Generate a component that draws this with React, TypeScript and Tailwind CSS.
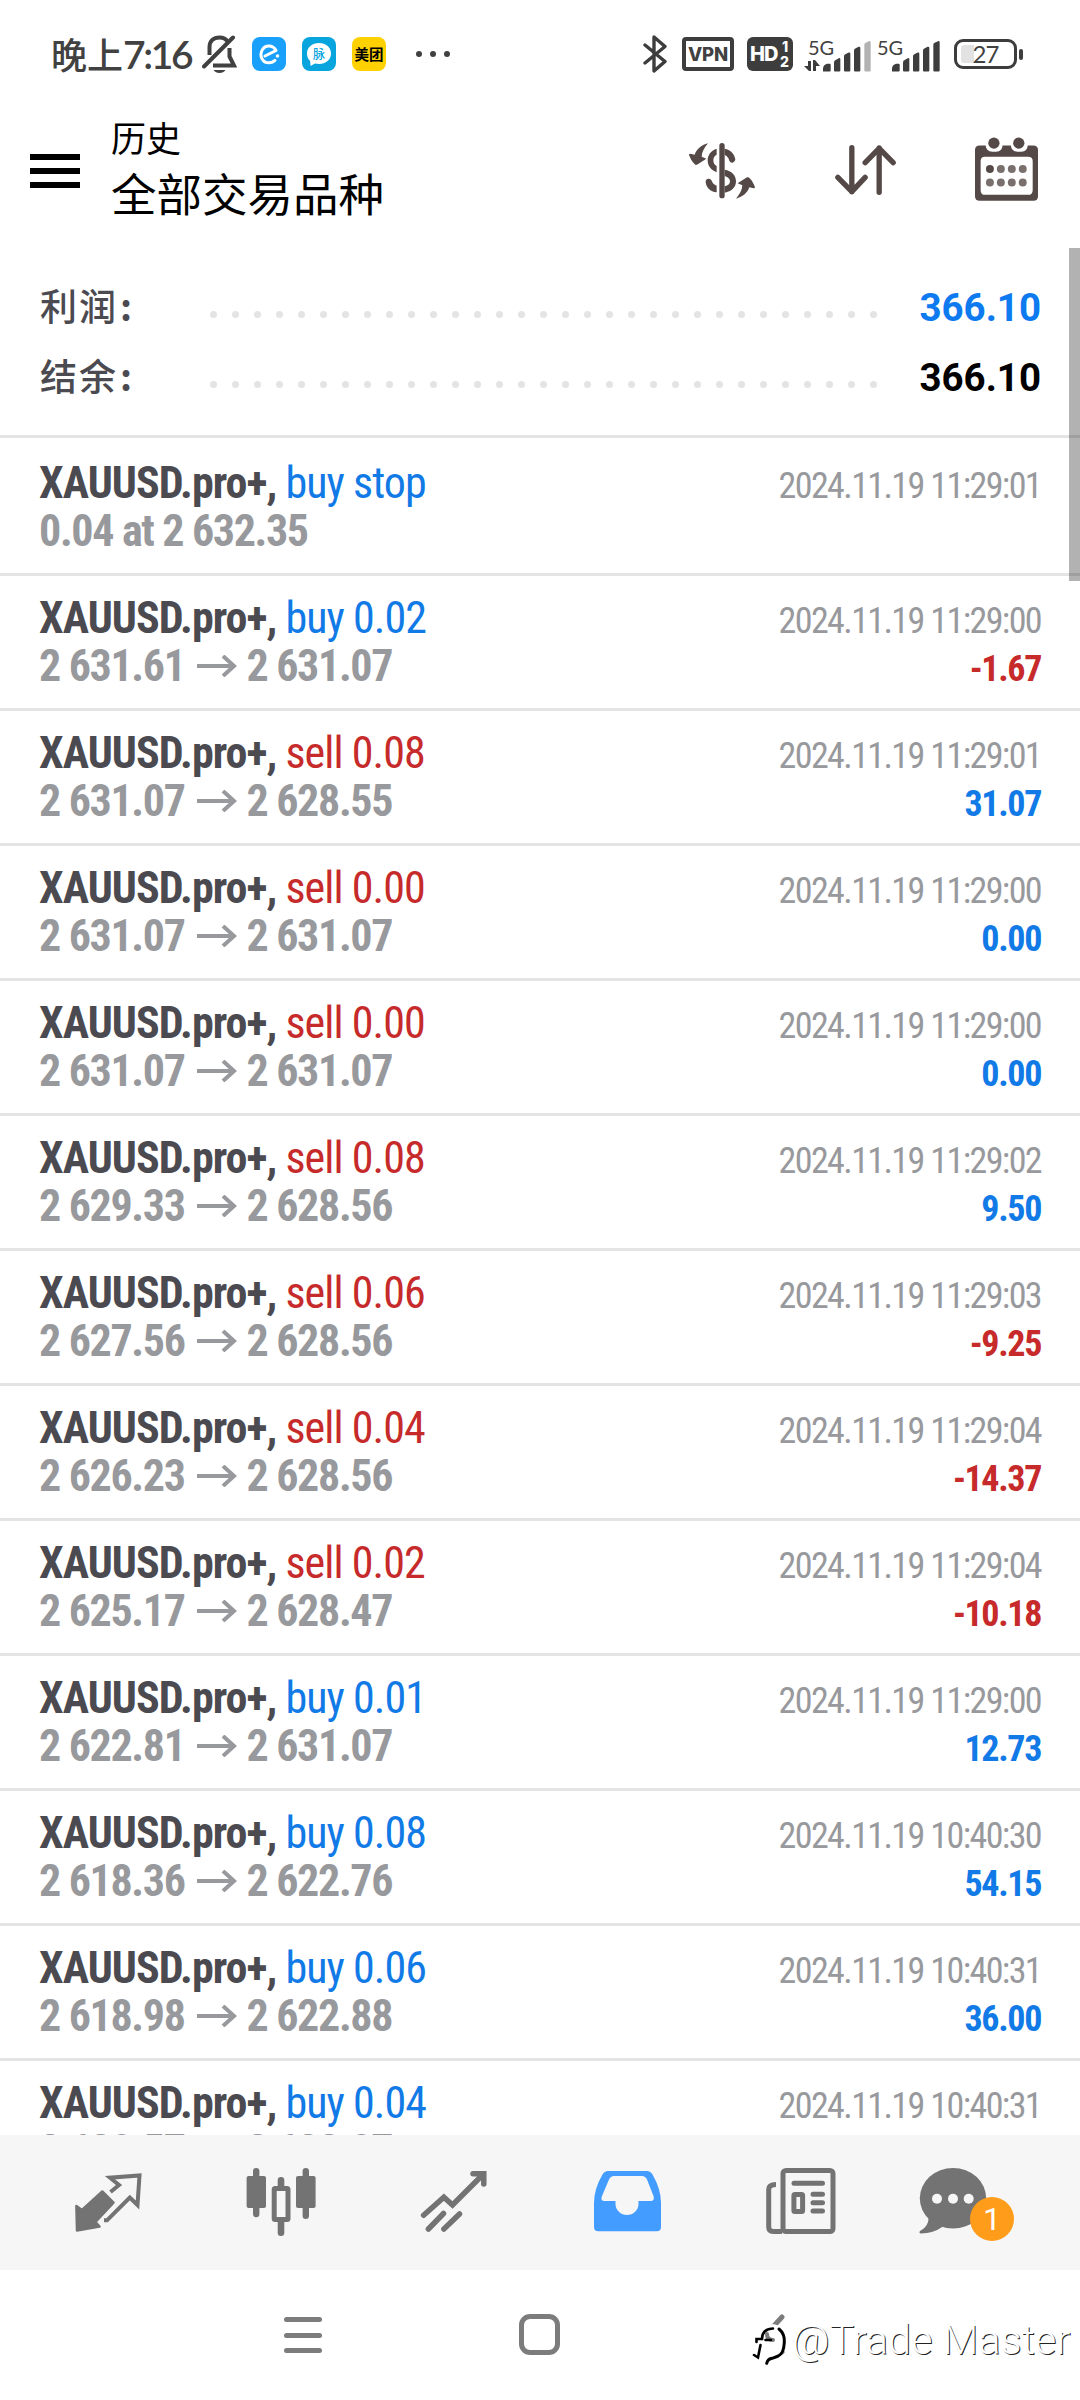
import type { ReactNode } from "react";
import clsx from "clsx";

type Deal = {
  side: "buy" | "sell";
  label: string;
  detail: string[];
  time: string;
  profit?: string;
};

const deals: Deal[] = [
  { side: "buy", label: "buy stop", detail: ["0.04 at 2 632.35"], time: "2024.11.19 11:29:01" },
  { side: "buy", label: "buy 0.02", detail: ["2 631.61", "2 631.07"], time: "2024.11.19 11:29:00", profit: "-1.67" },
  { side: "sell", label: "sell 0.08", detail: ["2 631.07", "2 628.55"], time: "2024.11.19 11:29:01", profit: "31.07" },
  { side: "sell", label: "sell 0.00", detail: ["2 631.07", "2 631.07"], time: "2024.11.19 11:29:00", profit: "0.00" },
  { side: "sell", label: "sell 0.00", detail: ["2 631.07", "2 631.07"], time: "2024.11.19 11:29:00", profit: "0.00" },
  { side: "sell", label: "sell 0.08", detail: ["2 629.33", "2 628.56"], time: "2024.11.19 11:29:02", profit: "9.50" },
  { side: "sell", label: "sell 0.06", detail: ["2 627.56", "2 628.56"], time: "2024.11.19 11:29:03", profit: "-9.25" },
  { side: "sell", label: "sell 0.04", detail: ["2 626.23", "2 628.56"], time: "2024.11.19 11:29:04", profit: "-14.37" },
  { side: "sell", label: "sell 0.02", detail: ["2 625.17", "2 628.47"], time: "2024.11.19 11:29:04", profit: "-10.18" },
  { side: "buy", label: "buy 0.01", detail: ["2 622.81", "2 631.07"], time: "2024.11.19 11:29:00", profit: "12.73" },
  { side: "buy", label: "buy 0.08", detail: ["2 618.36", "2 622.76"], time: "2024.11.19 10:40:30", profit: "54.15" },
  { side: "buy", label: "buy 0.06", detail: ["2 618.98", "2 622.88"], time: "2024.11.19 10:40:31", profit: "36.00" },
  { side: "buy", label: "buy 0.04", detail: ["2 620.57", "2 622.87"], time: "2024.11.19 10:40:31" },
];

const Signal = ({ weak }: { weak?: boolean }) => (
  <svg viewBox="0 0 144 92" className="h-[31px] w-[48px]">
    <g fill="#3d3d3d">
      <path d="M0 91V81q2-10 12-13h8q3 0 3 3v17q0 3-3 3z" />
      <path d="M33 88V64q0-4 4-7l10-6q5-1 5 3v34q0 3-3 3H36q-3 0-3-3z" />
      <path d="M63 88V45q0-4 4-6l10-5q5-1 5 3v51q0 3-3 3H66q-3 0-3-3z" />
      <path d="M93 88V28q0-4 4-6l10-5q5-1 5 3v68q0 3-3 3H96q-3 0-3-3z" />
      <path
        fill={weak ? "#b2b2b2" : "#3d3d3d"}
        d="M124 88V11q0-4 4-6l10-5q5-1 5 3v85q0 3-3 3h-13q-3 0-3-3z"
      />
    </g>
  </svg>
);

const StatusBar = () => (
  <div className="flex h-[108px] items-center pl-[51px] text-[#414141]">
    <span className="w-[150px] whitespace-nowrap font-['Noto_Sans_CJK_SC',sans-serif] text-[36px] font-medium leading-none">
      晚上
      <span className="font-[Lato,sans-serif] text-[39px] font-semibold tracking-[-2.400px]">
        7:16
      </span>
    </span>
    {/* muted bell */}
    <svg viewBox="0 0 35 38" className="ml-px h-[38px] w-[35px]" fill="none">
      <path d="M7.500 20V12C7.500 6 11.500 2.500 17.500 2.500c3.500 0 6.500 1.500 8 4" stroke="#414141" strokeWidth="4" />
      <path d="M27.500 13v8.500L32 30.500H11" stroke="#414141" strokeWidth="4" />
      <path d="M2 31.500L31 2.500" stroke="#414141" strokeWidth="4" strokeLinecap="round" />
      <path d="M11.500 35h12q-2 3-6 3T11.500 35z" fill="#414141" />
    </svg>
    <svg viewBox="0 0 34 34" className="ml-[15px] size-[34px]" fill="none">
      <rect width="34" height="34" rx="8" fill="#18a0fb" />
      <path d="M13 19L24 13.500C21.500 8.500 14 7 10.500 12.500 6.500 19 11 26 17 25.800c2.500 0 4.500-.8 6-2.500" stroke="#fff" strokeWidth="3" strokeLinecap="round" strokeLinejoin="round" />
      <circle cx="25.500" cy="19" r="1.800" fill="#fff" />
    </svg>
    <div className="relative ml-[16px] flex size-[34px] items-center justify-center rounded-[8px] bg-[#08a4de]">
      <svg viewBox="0 0 34 34" className="absolute inset-0">
        <path d="M17 6c7 0 12 4.500 12 10.500S24 27 17 27l-4-.4L8.500 29l-.3-5C6 22 5 19.500 5 16.500 5 10.500 10 6 17 6z" fill="#fff" />
      </svg>
      <span className="relative font-['Noto_Sans_CJK_SC',sans-serif] text-[12px] font-medium leading-none text-[#08a4de]">脉</span>
    </div>
    <div className="ml-[16px] flex size-[34px] items-center justify-center rounded-[8px] bg-[#ffd100] font-['Noto_Sans_CJK_SC',sans-serif] text-[14.500px] font-bold leading-none text-black">
      美团
    </div>
    <div className="ml-[30px] flex gap-[8px]">
      <i className="size-[6px] rounded-full bg-[#414141]" />
      <i className="size-[6px] rounded-full bg-[#414141]" />
      <i className="size-[6px] rounded-full bg-[#414141]" />
    </div>

    <svg viewBox="0 0 24 38" className="ml-[193px] h-[38px] w-[24px]" fill="none" stroke="#3d3d3d" strokeWidth="3.400" strokeLinejoin="round" strokeLinecap="round">
      <path d="M2 10l20 16.500L11 36V2l11 9.500L2 28" />
    </svg>
    <div className="ml-[15px] flex h-[34px] w-[52px] items-center justify-center rounded-[4px] border-[4px] border-[#3d3d3d] font-[Inter,sans-serif] text-[18.500px] font-extrabold leading-none tracking-[-.2px]">
      VPN
    </div>
    <div className="ml-[13px] flex h-[34px] w-[46px] items-center rounded-[6px] bg-[#3d3d3d] pl-[3px] font-[Inter,sans-serif] font-extrabold text-white">
      <span className="w-[30px] text-[20px] leading-none tracking-[-1px]">HD</span>
      <span className="flex flex-col text-[14px] leading-[15px]">
        <span className="pl-[2px]">1</span>
        <span>2</span>
      </span>
    </div>
    <div className="relative ml-[11px] mt-[2px] flex h-[34px] w-[67px] items-end justify-end">
      <span className="absolute left-[4px] top-0 font-[Lato,sans-serif] text-[20px] leading-[18px]">5G</span>
      <svg viewBox="0 0 16 12" className="absolute bottom-0 left-0 h-[12px] w-[16px]" fill="#3d3d3d">
        <path d="M4 1h3v10H5L0 6h4zM9 11h3V6h4L11 0H9z" />
      </svg>
      <Signal weak />
    </div>
    <div className="relative ml-[6px] mt-[2px] flex h-[34px] w-[63px] items-end justify-end">
      <span className="absolute left-0 top-0 font-[Lato,sans-serif] text-[20px] leading-[18px]">5G</span>
      <Signal />
    </div>
    <div className="ml-[14px] flex items-center">
      <div className="relative flex h-[30px] w-[63px] items-center justify-center rounded-[9px] border-[3px] border-[#3d3d3d]">
        <i className="absolute left-[4px] top-[3px] h-[18px] w-[13px] rounded-l-[3px] bg-[#e2e2e2]" />
        <span className="relative font-[Lato,sans-serif] text-[24px] leading-none tracking-[-1px]">27</span>
      </div>
      <i className="ml-[2px] h-[11px] w-[4px] rounded-[2px] bg-[#3d3d3d]" />
    </div>
  </div>
);

const Header = () => (
  <header className="flex h-[140px] items-start pl-[30px] text-black">
    <div className="mt-[46px] flex w-[50px] flex-col gap-[8px]">
      <i className="h-[6px] bg-black" />
      <i className="h-[6px] bg-black" />
      <i className="h-[6px] bg-black" />
    </div>
    <div className="ml-[31px] mt-[9px] w-[578px] font-['Noto_Sans_CJK_SC',sans-serif]">
      <div className="text-[35px] leading-[40px]">历史</div>
      <h1 className="mt-[8px] text-[45.500px] leading-[54px]">全部交易品种</h1>
    </div>
    {/* currency exchange */}
    <svg viewBox="0 0 198 168" className="mt-[35px] h-[56px] w-[66px]" fill="#544946">
      <path d="M57 1C46 14 38 28 38 41l14 6-28 18q-5 2-8-3C8 54 3 44 0 35q0-3 4-3l13 3C22 20 36 6 57 1z" />
      <path d="M141 167C152 154 160 140 160 127l-14-6 28-18q5-2 8 3c8 8 13 18 16 27q0 3-4 3l-13-3C176 148 162 162 141 167z" />
      <rect x="91" y="0" width="16" height="166" rx="8" />
      <path d="M83 17v18q-10 5-10 17 0 12 10 17v19C66 81 56 69 56 52 56 35 67 22 83 17z" />
      <path d="M107 17c17 3 29 14 32 32q0 8-8 10-7 1-10-6-4-14-14-17z" />
      <path d="M107 80c21 3 34 17 34 35s-14 31-34 34v-19q16-3 16-15 0-10-16-16z" />
      <path d="M50 116q0-8 8-9 7-1 10 6 3 10 15 15v20C64 146 51 134 50 116z" />
    </svg>
    <svg viewBox="0 0 182 150" className="ml-[80px] mt-[37px] h-[50px] w-[61px]" fill="none" stroke="#544946" strokeWidth="16" strokeLinecap="round" strokeLinejoin="round">
      <path d="M50 8v132M8 97l42 43 40-43M132 142V9M90 53l42-43 42 43" />
    </svg>
    <svg viewBox="0 0 190 192" className="ml-[79px] mt-[29px] h-[64px] w-[63px]" fill="#544946">
      <path fillRule="evenodd" d="M14 25h18q2 18 20 19h12q18-1 19-19h25q2 18 20 19h12q18-1 19-19h17q14 0 14 14v139q0 14-14 14H14q-14 0-14-14V39q0-14 14-14zM30 59q-13 0-13 13v87q0 15 13 15h130q14 0 14-15V72q0-13-14-13z" />
      <circle cx="57" cy="18" r="17" />
      <circle cx="132" cy="18" r="17" />
      <circle cx="45" cy="96" r="12" />
      <g fill="#79706d">
        <circle cx="78" cy="96" r="12" />
        <circle cx="111" cy="96" r="12" />
        <circle cx="144" cy="96" r="12" />
        <circle cx="45" cy="137" r="12" />
        <circle cx="78" cy="137" r="12" />
        <circle cx="111" cy="137" r="12" />
        <circle cx="144" cy="137" r="12" />
      </g>
    </svg>
  </header>
);

const SummaryRow = ({ label, value, blue }: { label: string; value: string; blue?: boolean }) => (
  <div className="flex h-[70px] items-center pl-[40px] pr-[39px]">
    <span className="mb-[3px] w-[170px] font-['Noto_Sans_CJK_SC',sans-serif] text-[37px] font-medium leading-none tracking-[2px] text-[#4b4a50]">
      {label}
      <span className="pl-[2px] font-bold">:</span>
    </span>
    <span className="mt-[14px] flex w-[667px] justify-between">
      {Array.from({ length: 31 }, (_, i) => (
        <i key={i} className="size-[7px] rounded-full bg-[#e4e4e4]" />
      ))}
    </span>
    <span
      className={clsx(
        "ml-auto mt-[3px] font-[Roboto,sans-serif] text-[38.500px] font-bold leading-none",
        blue ? "text-[#0d7af0]" : "text-black",
      )}
    >
      {value}
    </span>
  </div>
);

const DealRow = ({ deal, first }: { deal: Deal; first: boolean }) => (
  <li
    className={clsx(
      "flex shrink-0 justify-between border-t-[3px] border-[#e4e4e4] pl-[39px] pr-[39px] font-[Roboto,sans-serif] [font-stretch:75%]",
      first ? "h-[138px] pt-[21px]" : "h-[135px] pt-[18px]",
    )}
  >
    <div className="whitespace-nowrap text-[44px] leading-[48px]">
      <div className="tracking-[-.950px]">
        <b className="font-bold text-[#4b4a50]">XAUUSD.pro+,</b>{" "}
        <span className={deal.side === "buy" ? "text-[#117ae6]" : "text-[#c62a2a]"}>
          {deal.label}
        </span>
      </div>
      <div className="flex items-center font-bold tracking-[-1.350px] text-[#98999d]">
        {deal.detail[0]}
        {deal.detail[1] && (
          <>
            <svg viewBox="0 0 40 22" className="mb-px ml-[12px] mr-[10px] h-[22px] w-[40px]" fill="none" stroke="#98999d" strokeWidth="4">
              <path d="M0 11h37M26 1l11 10-11 10" />
            </svg>
            {deal.detail[1]}
          </>
        )}
      </div>
    </div>
    <div className="pt-[3px] text-right text-[36px] leading-[48px] tracking-[-1.600px]">
      <div className="text-[#98999d]">{deal.time}</div>
      {deal.profit && (
        <div
          className={clsx(
            "font-bold tracking-[-1.350px]",
            deal.profit.startsWith("-") ? "text-[#c62a2a]" : "text-[#117ae6]",
          )}
        >
          {deal.profit}
        </div>
      )}
    </div>
  </li>
);

const Tab = ({ children }: { children: ReactNode }) => (
  <svg viewBox="0 0 173 135" className="h-[135px] w-[173px]" fill="none">
    {children}
  </svg>
);

const TabBar = () => (
  <nav className="flex h-[135px] bg-[#f6f6f6] pl-[22px]">
    <Tab>
      <path d="M54.400 71l5.600 4L80.300 56.500 91.500 67.700 73.500 87l4 4.500-22.500 4z" fill="#737373" stroke="#737373" strokeWidth="2.500" strokeLinejoin="round" />
      <path d="M88.500 57l8.500-7-9-7.300L117.500 40.500 115.500 70l-7.700-7.500L85 85.300h-3" stroke="#737373" strokeWidth="4" />
    </Tab>
    <Tab>
      <g fill="#737373">
        <rect x="51.600" y="41" width="19.400" height="32" rx="2" />
        <rect x="101" y="41" width="19.600" height="32" rx="2" />
        <rect x="58" y="33" width="6.400" height="49.300" rx="3.200" />
        <rect x="107.600" y="33" width="6.400" height="51" rx="3.200" />
        <rect x="82.700" y="42" width="6.600" height="14" rx="3.200" />
        <rect x="82.700" y="84" width="6.600" height="17" rx="3.200" />
      </g>
      <rect x="79.200" y="53.500" width="13.800" height="31" rx="1" fill="#f6f6f6" stroke="#737373" strokeWidth="5" />
    </Tab>
    <Tab>
      <g stroke="#737373" strokeWidth="5.500" strokeLinecap="round">
        <path d="M55.600 80.300l20.300-18 8.600 7.700 31-31M105 38.700h10.800V49" />
        <path d="M75.500 78.500L60.400 94M91.500 79L75.900 94" />
      </g>
    </Tab>
    <Tab>
      <path
        fillRule="evenodd"
        fill="#439cff"
        d="M67 36h39q3.500 0 5.500 3.500Q120 54 120 68v24q0 4.300-4.300 4.300H57.300Q53 96.300 53 92V68q0-14 8.500-28.500Q63.500 36 67 36zM73 41q-3.500 0-5 3.500L61 61q-2 5 2.500 5h11v3a11.500 11 0 0 0 23 0v-3h12q4.500 0 3-5L106 44.500Q104.500 41 101 41z"
      />
    </Tab>
    <Tab>
      <g stroke="#737373" strokeWidth="5" strokeLinecap="round">
        <rect x="69" y="35.500" width="50" height="61" rx="3" />
        <path d="M62 49.500q-7.300 0-7.300 5V92q0 4.500 4.500 4.500H68" strokeLinecap="butt" />
        <path d="M80 48.300h28.500M99 59.300h9.500M99 67.700h9.500M99 76h9.500" />
        <rect x="79.900" y="59.500" width="8.700" height="17" rx="1" />
      </g>
    </Tab>
    <div className="relative">
      <Tab>
        <ellipse cx="66" cy="63.300" rx="33.200" ry="30.300" fill="#737373" />
        <path d="M38 76q5 6 3 11-2 6-8 9-1.500 2 1 2.500 12 0 22-7z" fill="#737373" />
        <circle cx="50" cy="63.700" r="5" fill="#f6f6f6" />
        <circle cx="66" cy="63.700" r="5" fill="#f6f6f6" />
        <circle cx="81.700" cy="63.700" r="5" fill="#f6f6f6" />
      </Tab>
      <span className="absolute left-[83px] top-[62px] flex size-[44px] items-center justify-center rounded-full bg-[#ff9d1b] font-[Roboto,sans-serif] text-[32px] leading-none text-white">
        1
      </span>
    </div>
  </nav>
);

const SystemNav = () => (
  <div className="relative flex h-[130px] items-start bg-white pl-[284px]">
    <div className="mt-[47px] flex w-[38px] flex-col gap-[10.500px]">
      <i className="h-[5px] rounded-full bg-[#7c7c7c]" />
      <i className="h-[5px] rounded-full bg-[#7c7c7c]" />
      <i className="h-[5px] rounded-full bg-[#7c7c7c]" />
    </div>
    <div className="ml-[197px] mt-[44px] size-[41px] rounded-[11px] border-[5px] border-[#7c7c7c]" />
    <svg viewBox="0 0 24 44" className="ml-[203px] mt-[43px] h-[44px] w-[24px]" fill="none" stroke="#7c7c7c" strokeWidth="5" strokeLinecap="round" strokeLinejoin="round">
      <path d="M19 4L3 21.500 19 39" />
    </svg>
    <div className="absolute left-[748px] top-[42px] flex items-start">
      <svg viewBox="0 0 44 56" className="h-[56px] w-[44px]" fill="none" strokeLinecap="round">
        <path d="M7 30Q9 16 25 12q13 2 13 16 0 16-12 19l-8 5-3-14-5 8z" fill="#fff" />
        <path d="M19 22q0 6 6 6" stroke="#7c7c7c" strokeWidth="4" />
        <path d="M8.500 30v-3h5.500q0-10 11-10.500M17.500 28H23M12.500 33L10 45.500 6 43" stroke="#000" strokeWidth="2.600" />
        <path d="M31 17q6 5 5.300 13.500-.5 11-6 13.500l-6 2.300q-4.500.5-5.600 5" stroke="#000" strokeWidth="3" />
      </svg>
      <span className="mt-[4px] whitespace-nowrap font-[Roboto,sans-serif] text-[41px] font-light leading-[48px] tracking-[.2px] text-white [text-shadow:1px_1px_0_#222]">
        @Trade Master
      </span>
    </div>
  </div>
);

const App = () => (
  <div className="flex h-[2400px] w-[1080px] flex-col overflow-hidden bg-white">
    <StatusBar />
    <Header />
    <main className="relative flex h-[1887px] flex-col overflow-hidden">
      <section className="h-[187px] shrink-0 pt-[24px]">
        <SummaryRow label="利润" value="366.10" blue />
        <SummaryRow label="结余" value="366.10" />
      </section>
      <ul className="flex flex-col">
        {deals.map((deal, i) => (
          <DealRow key={i} deal={deal} first={i === 0} />
        ))}
      </ul>
      <i className="absolute right-0 top-0 h-[333px] w-[11px] bg-black/30" />
    </main>
    <TabBar />
    <SystemNav />
  </div>
);

export default App;
